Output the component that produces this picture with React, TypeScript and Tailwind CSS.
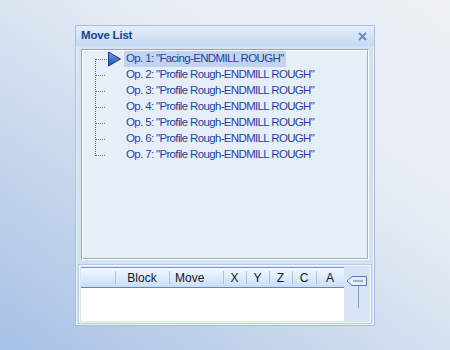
import React from 'react';

const ops = [
  'Op. 1: "Facing-ENDMILL ROUGH"',
  'Op. 2: "Profile Rough-ENDMILL ROUGH"',
  'Op. 3: "Profile Rough-ENDMILL ROUGH"',
  'Op. 4: "Profile Rough-ENDMILL ROUGH"',
  'Op. 5: "Profile Rough-ENDMILL ROUGH"',
  'Op. 6: "Profile Rough-ENDMILL ROUGH"',
  'Op. 7: "Profile Rough-ENDMILL ROUGH"',
];

const columns = [
  { label: '', w: 'w-[34px]', align: 'justify-center' },
  { label: 'Block', w: 'w-[54px]', align: 'justify-center' },
  { label: 'Move', w: 'w-[54px]', align: 'justify-start pl-[6px]' },
  { label: 'X', w: 'w-[23px]', align: 'justify-center' },
  { label: 'Y', w: 'w-[23px]', align: 'justify-center' },
  { label: 'Z', w: 'w-[23px]', align: 'justify-center' },
  { label: 'C', w: 'w-[24px]', align: 'justify-center' },
  { label: 'A', w: 'w-[28px]', align: 'justify-center' },
];

function TreeLines() {
  const rows = ops.map((_, i) => 8.5 + i * 16);
  return (
    <svg width="40" height="112" className="shrink-0">
      <defs>
        <linearGradient id="arrowFill" x1="0" y1="0" x2="0" y2="1">
          <stop offset="0" stopColor="#6fa0e6" />
          <stop offset="1" stopColor="#1d4fb0" />
        </linearGradient>
      </defs>
      <line x1="11.5" y1="8" x2="11.5" y2="105" stroke="#6d6d6d" strokeDasharray="1 1" />
      {rows.map((y, i) => (
        <line key={i} x1="12" y1={y} x2={i === 0 ? 23 : 22} y2={y} stroke="#6d6d6d" strokeDasharray="1 1" />
      ))}
      <polygon points="24.5,1 36.5,8 24.5,15" fill="url(#arrowFill)" stroke="#1b3c86" strokeWidth="1" strokeLinejoin="round" />
    </svg>
  );
}

export default function App() {
  return (
    <div
      className="w-[450px] h-[350px] pl-[75px] pt-[25px] bg-[linear-gradient(35deg,#a6c1e6_0%,#c9d8ec_35%,#e6ecf4_65%,#eef2f7_100%)]"
      style={{ fontFamily: '"Liberation Sans", Arial, sans-serif' }}
    >
      <div className="w-[300px] h-[301px] flex flex-col border border-[#a4bee2] bg-[#d3e1f3] shadow-[inset_0_0_0_1px_#e9f1fb]">
        {/* title bar */}
        <div className="h-[20px] flex items-center justify-between pl-[5px] pr-[7px] bg-[linear-gradient(#e4eefb,#c5d9f3)]">
          <span className="text-[11.5px] font-bold text-[#15428b] leading-none tracking-[-0.2px]">Move List</span>
          <svg width="9" height="9" viewBox="0 0 9 9">
            <path d="M1 1 L8 8 M8 1 L1 8" stroke="#6a89b8" strokeWidth="1.8" />
          </svg>
        </div>

        {/* tree */}
        <div className="mt-[3px] mx-[5px] h-[211px] border border-t-[#9ea4ab] border-l-[#9ea4ab] border-r-white border-b-white">
          <div className="h-full border border-t-white border-l-white border-r-[#a6acb3] border-b-[#a6acb3] bg-[#e7eef7] pl-[1px] flex">
            <TreeLines />
            <div className="flex flex-col">
              {ops.map((op, i) => (
                <div key={i} className="h-[16px] flex items-center">
                  <span
                    className={
                      'px-[2px] h-[16px] flex items-center text-[11.5px] tracking-[-0.65px] text-[#1f44a0] whitespace-nowrap ' +
                      (i === 0 ? 'bg-[#c1d4ee]' : '')
                    }
                  >
                    {op}
                  </span>
                </div>
              ))}
            </div>
          </div>
        </div>

        {/* lower grid */}
        <div className="mt-[4px] mx-[2px] h-[60px] border border-[#b6cbe8] p-[2px] bg-[#d6e4f5] shadow-[inset_0_0_0_1px_#f2f7fd]">
          <div className="flex h-full">
            <div className="flex flex-col w-[263px]">
              <div className="h-[21px] flex border-t border-t-[#7298d2] border-b border-b-[#5d86c6] bg-[linear-gradient(#f3f8ff,#c9ddf7)]">
                {columns.map((c, i) => (
                  <div key={i} className={`relative h-full flex items-center ${c.w} ${c.align}`}>
                    {i > 0 && <div className="absolute left-0 top-[3px] h-[13px] w-px bg-[#a7c3ea]" />}
                    <span className="text-[12px] text-[#101828] leading-none">{c.label}</span>
                  </div>
                ))}
              </div>
              <div className="flex-1 bg-white" />
            </div>
            <div className="flex-1 flex flex-col items-center pt-[8px] pl-[1px]">
              <svg width="22" height="34" viewBox="0 0 22 34">
                <path d="M1 6 L6 1.5 H20.5 V10.5 H6 Z" fill="#e3edf9" stroke="#5a7db6" />
                <line x1="7" y1="6" x2="17" y2="6" stroke="#5a7db6" />
                <line x1="12.5" y1="11" x2="12.5" y2="33" stroke="#7b9fd4" />
              </svg>
            </div>
          </div>
        </div>
      </div>
    </div>
  );
}
